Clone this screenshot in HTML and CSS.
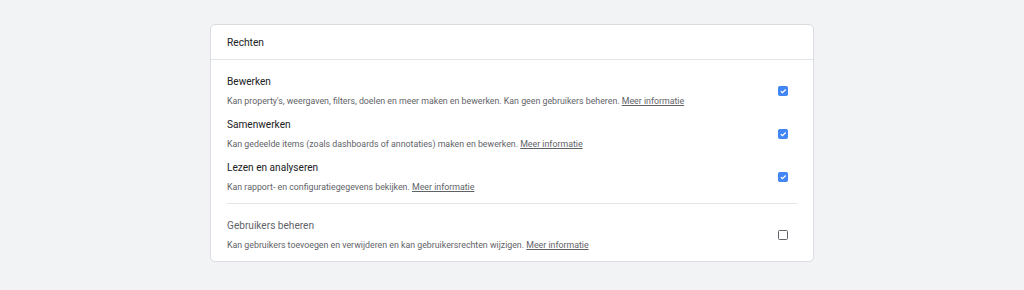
FILE: index.html
```html
<!DOCTYPE html>
<html lang="nl">
  <head>
    <meta charset="UTF-8" />
    <meta name="viewport" content="width=device-width, initial-scale=1" />
    <title>Rechten</title>
    <link rel="stylesheet" href="styles.css">
  </head>
  <body>
    <div class="card">
      <div class="card-header">Rechten</div>

      <div class="section">
        <div class="perm">
          <div class="perm-text">
            <div class="perm-title">Bewerken</div>
            <div class="perm-desc">
              Kan property's, weergaven, filters, doelen en meer maken en bewerken. Kan geen gebruikers beheren.
              <a href="#">Meer informatie</a>
            </div>
          </div>
          <span class="check checked" role="checkbox" aria-checked="true">
            <svg viewBox="0 0 10 10"><path d="M2.2 5.2 L4.1 7 L7.9 3.2" /></svg>
          </span>
        </div>

        <div class="perm">
          <div class="perm-text">
            <div class="perm-title">Samenwerken</div>
            <div class="perm-desc">
              Kan gedeelde items (zoals dashboards of annotaties) maken en bewerken.
              <a href="#">Meer informatie</a>
            </div>
          </div>
          <span class="check checked" role="checkbox" aria-checked="true">
            <svg viewBox="0 0 10 10"><path d="M2.2 5.2 L4.1 7 L7.9 3.2" /></svg>
          </span>
        </div>

        <div class="perm">
          <div class="perm-text">
            <div class="perm-title">Lezen en analyseren</div>
            <div class="perm-desc">
              Kan rapport- en configuratiegegevens bekijken.
              <a href="#">Meer informatie</a>
            </div>
          </div>
          <span class="check checked" role="checkbox" aria-checked="true">
            <svg viewBox="0 0 10 10"><path d="M2.2 5.2 L4.1 7 L7.9 3.2" /></svg>
          </span>
        </div>
      </div>

      <div class="section users">
        <div class="perm">
          <div class="perm-text">
            <div class="perm-title muted">Gebruikers beheren</div>
            <div class="perm-desc">
              Kan gebruikers toevoegen en verwijderen en kan gebruikersrechten wijzigen.
              <a href="#">Meer informatie</a>
            </div>
          </div>
          <span class="check" role="checkbox" aria-checked="false"></span>
        </div>
      </div>
    </div>
  </body>
</html>
```

FILE: styles.css
```css
* {
  box-sizing: border-box;
}
body {
  margin: 0;
  font-family: Roboto, "Liberation Sans", sans-serif;
  background-color: #f1f3f4;
  color: #202124;
  min-height: 100vh;
  padding-top: 24px;
}
.card {
  width: 604px;
  margin-left: 210px;
  background: #fff;
  border: 1px solid #dadce0;
  border-radius: 5px;
}
.card-header {
  height: 35px;
  padding: 0 16px;
  display: flex;
  align-items: center;
  font-size: 10.2px;
  border-bottom: 1px solid #e3e5e8;
}
.section {
  margin: 0 16px;
  padding: 14px 0 9px;
  display: flex;
  flex-direction: column;
  gap: 9px;
}
.section.users {
  border-top: 1px solid #e3e5e8;
  padding: 14px 0 9px;
}
.perm {
  display: flex;
  align-items: center;
  justify-content: space-between;
}
.perm-text {
  display: flex;
  flex-direction: column;
  gap: 4px;
}
.perm-title {
  font-size: 10.1px;
  line-height: 16px;
  color: #202124;
}
.perm-title.muted {
  color: #5f6368;
}
.perm-desc {
  font-size: 8.8px;
  line-height: 14px;
  color: #5f6368;
}
.perm-desc a {
  color: #5f6368;
  text-decoration: underline;
}
.check {
  width: 10.5px;
  height: 10.5px;
  margin-right: 9px;
  border: 1.5px solid #5f6368;
  border-radius: 1.5px;
  display: flex;
  align-items: center;
  justify-content: center;
  flex-shrink: 0;
}
.check.checked {
  background: #4285f4;
  border-color: #4285f4;
}
.check svg {
  width: 10px;
  height: 10px;
  fill: none;
  stroke: #fff;
  stroke-width: 1.5;
}
```
